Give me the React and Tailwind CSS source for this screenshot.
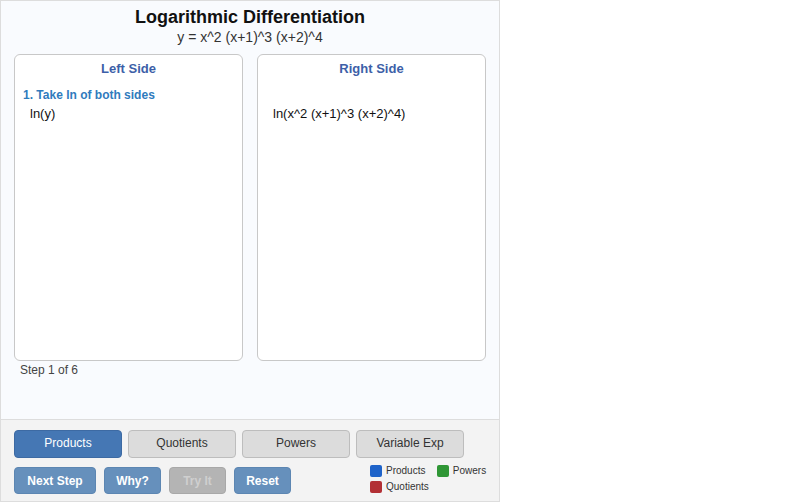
import React from 'react';

const modes = ['Products', 'Quotients', 'Powers', 'Variable Exp'];

const App = () => (
  <div className="w-[500px] h-[502px] flex flex-col border border-[#dddddd] bg-[#f9fbfe] font-['Liberation_Sans',Arial,sans-serif] text-[#222]">
    {/* Main work area */}
    <div className="flex-1 flex flex-col px-[13px] pt-[6px]">
      <h1 className="text-center text-[18px] font-bold leading-[20px] text-[#111]">Logarithmic Differentiation</h1>
      <div className="text-center text-[14px] leading-[18px] text-[#333] mt-[1px]">y = x^2 (x+1)^3 (x+2)^4</div>
      <div className="flex gap-[14px] mt-[8px] h-[307px]">
        <div className="flex-1 bg-white border border-[#c8c8c8] rounded-[6px] px-[8px] pt-[6px]">
          <div className="text-center text-[13px] font-bold text-[#3d5fa8] leading-[16px]">Left Side</div>
          <div className="mt-[11px] text-[12px] font-bold text-[#2f7bbd] leading-[14px]">1. Take ln of both sides</div>
          <div className="mt-[4px] pl-[7px] text-[13px] leading-[16px] text-[#111]">ln(y)</div>
        </div>
        <div className="flex-1 bg-white border border-[#c8c8c8] rounded-[6px] px-[8px] pt-[6px]">
          <div className="text-center text-[13px] font-bold text-[#3d5fa8] leading-[16px]">Right Side</div>
          <div className="mt-[29px] pl-[7px] text-[13px] leading-[16px] text-[#111]">ln(x^2 (x+1)^3 (x+2)^4)</div>
        </div>
      </div>
      <div className="mt-[2px] pl-[6px] text-[12px] leading-[14px] text-[#444]">Step 1 of 6</div>
    </div>

    {/* Controls */}
    <div className="h-[82px] bg-[#f3f3f3] border-t border-[#dddddd] px-[13px] pt-[10px]">
      <div className="flex gap-[6px]">
        {modes.map((m, i) => (
          <button
            key={m}
            className={
              i === 0
                ? 'w-[108px] h-[28px] rounded-[4px] bg-[#4577b4] border border-[#3d6aa3] text-white text-[12px] leading-[14px] pb-[2px]'
                : 'w-[108px] h-[28px] rounded-[4px] bg-[#dcdcdc] border border-[#bdbdbd] text-[#333] text-[12px] leading-[14px] pb-[2px]'
            }
          >
            {m}
          </button>
        ))}
      </div>
      <div className="flex items-start mt-[9px]">
        <div className="flex gap-[8px]">
          <button className="w-[82px] h-[27px] rounded-[4px] bg-[#6690bc] border border-[#5c86b2] text-white text-[12px] font-bold">Next Step</button>
          <button className="w-[57px] h-[27px] rounded-[4px] bg-[#6690bc] border border-[#5c86b2] text-white text-[12px] font-bold">Why?</button>
          <button className="w-[57px] h-[27px] rounded-[4px] bg-[#b4b4b4] border border-[#a8a8a8] text-[#cfcfcf] text-[12px] font-bold">Try It</button>
          <button className="w-[57px] h-[27px] rounded-[4px] bg-[#6690bc] border border-[#5c86b2] text-white text-[12px] font-bold">Reset</button>
        </div>
        <div className="ml-[79px] -mt-[2px] grid grid-cols-[auto_auto] gap-x-[8px] gap-y-[4px] text-[10px] leading-[12px] text-[#333]">
          <div className="flex items-center gap-[4px]"><span className="w-[12px] h-[12px] rounded-[2px] bg-[#1e63c9]"></span>Products</div>
          <div className="flex items-center gap-[4px]"><span className="w-[12px] h-[12px] rounded-[2px] bg-[#2f9635]"></span>Powers</div>
          <div className="flex items-center gap-[4px]"><span className="w-[12px] h-[12px] rounded-[2px] bg-[#b22f34]"></span>Quotients</div>
        </div>
      </div>
    </div>
  </div>
);

export default App;
